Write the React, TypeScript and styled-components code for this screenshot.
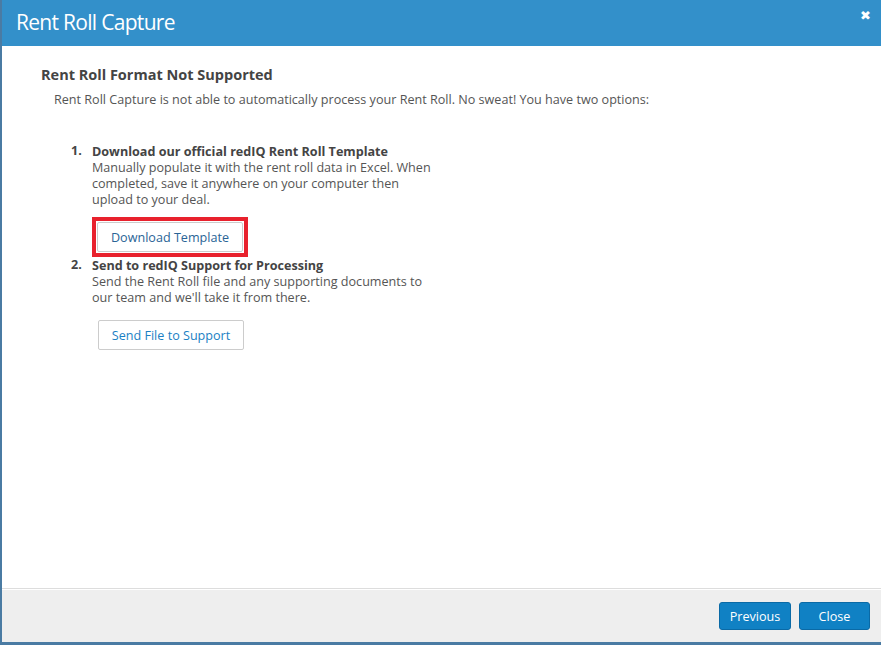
import React from "react";
import styled, { createGlobalStyle } from "styled-components";

const Global = createGlobalStyle`
  html, body { margin: 0; padding: 0; background: #fff; }
  body { font-family: "Open Sans", "Liberation Sans", sans-serif; }
  * { box-sizing: border-box; }
`;

const Modal = styled.div`
  width: 881px;
  height: 645px;
  display: flex;
  flex-direction: column;
  border-left: 2px solid #4a7ba3;
  border-bottom: 3px solid #4a7ba3;
  background: #fff;
`;

const Header = styled.div`
  height: 46px;
  flex: none;
  background: #3390ca;
  display: flex;
  align-items: center;
  justify-content: space-between;
  padding: 0 10px 2px 14px;
`;

const Title = styled.h1`
  margin: 0;
  font-size: 21px;
  font-weight: 400;
  color: #fff;
  letter-spacing: -0.7px;
`;

const CloseX = styled.button`
  border: 0;
  background: none;
  color: #fff;
  padding: 0;
  margin-top: -13px;
  font-size: 13px;
  font-weight: 700;
  line-height: 1;
  cursor: pointer;
  font-family: "DejaVu Sans", sans-serif;
`;

const Body = styled.div`
  flex: 1;
  padding: 19px 39px;
  color: #555;
`;

const Heading = styled.h2`
  margin: 0;
  font-size: 14.5px;
  font-weight: 700;
  color: #444;
  line-height: 20px;
`;

const Intro = styled.p`
  margin: 6px 0 0 13px;
  font-size: 12.6px;
  line-height: 18px;
  color: #555;
`;

const List = styled.ol`
  margin: 34px 0 0 0;
  padding: 0 0 0 30px;
  list-style: none;
`;

const Item = styled.li`
  display: grid;
  grid-template-columns: 21px 1fr;
  font-size: 12.6px;
  line-height: 16px;
`;

const Num = styled.span`
  font-weight: 700;
  color: #444;
`;

const ItemBody = styled.div`
  display: flex;
  flex-direction: column;
  align-items: flex-start;
`;

const ItemTitle = styled.div`
  font-weight: 700;
  color: #444;
  margin-top: 1px;
`;

const ItemDesc = styled.div`
  width: 344px;
  color: #555;
`;

const Highlight = styled.div<{ $on?: boolean }>`
  margin-top: ${(p) => (p.$on ? "9px" : "13px")};
  margin-left: ${(p) => (p.$on ? "0" : "5px")};
  padding: 1px;
  border: ${(p) => (p.$on ? "4px solid #e8212d" : "0")};
`;

const OutlineBtn = styled.button<{ $tone?: string }>`
  width: 146px;
  height: 30px;
  background: #fff;
  border: 1px solid #ccc;
  border-radius: 2px;
  font-family: inherit;
  font-size: 12.6px;
  color: ${(p) => p.$tone || "#2a6496"};
  padding: 0;
`;

const Footer = styled.div`
  height: 54px;
  flex: none;
  background: #eee;
  border-top: 1px solid #ddd;
  box-shadow: inset 0 1px 0 #fff;
  display: flex;
  align-items: center;
  justify-content: flex-end;
  gap: 8px;
  padding: 1px 11px 0 0;
`;

const PrimaryBtn = styled.button<{ $w: number }>`
  width: ${(p) => p.$w}px;
  height: 28px;
  background: #1081c4;
  border: 1px solid #0a6aa6;
  border-radius: 3px;
  color: #fff;
  font-family: inherit;
  font-size: 12.6px;
  padding: 0;
`;

export default function App() {
  return (
    <>
      <Global />
      <Modal>
        <Header>
          <Title>Rent Roll Capture</Title>
          <CloseX aria-label="close">✖</CloseX>
        </Header>
        <Body>
          <Heading>Rent Roll Format Not Supported</Heading>
          <Intro>
            Rent Roll Capture is not able to automatically process your Rent Roll. No sweat! You have two options:
          </Intro>
          <List>
            <Item>
              <Num>1.</Num>
              <ItemBody>
                <ItemTitle>Download our official redIQ Rent Roll Template</ItemTitle>
                <ItemDesc>
                  Manually populate it with the rent roll data in Excel. When completed, save it anywhere on your computer then upload to your deal.
                </ItemDesc>
                <Highlight $on>
                  <OutlineBtn>Download Template</OutlineBtn>
                </Highlight>
              </ItemBody>
            </Item>
            <Item>
              <Num>2.</Num>
              <ItemBody>
                <ItemTitle>Send to redIQ Support for Processing</ItemTitle>
                <ItemDesc>
                  Send the Rent Roll file and any supporting documents to our team and we'll take it from there.
                </ItemDesc>
                <Highlight>
                  <OutlineBtn $tone="#1a7fc4">Send File to Support</OutlineBtn>
                </Highlight>
              </ItemBody>
            </Item>
          </List>
        </Body>
        <Footer>
          <PrimaryBtn $w={72}>Previous</PrimaryBtn>
          <PrimaryBtn $w={71}>Close</PrimaryBtn>
        </Footer>
      </Modal>
    </>
  );
}
